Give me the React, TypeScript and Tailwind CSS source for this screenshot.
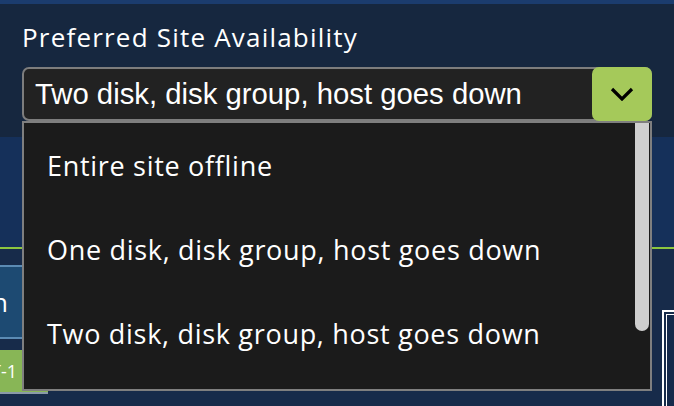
const options = [
  "Entire site offline",
  "One disk, disk group, host goes down",
  "Two disk, disk group, host goes down",
];

const App = () => {
  return (
    <div className="relative w-[674px] h-[406px] overflow-hidden bg-[#15305a] font-['Open_Sans',sans-serif] text-white">
      <div className="h-[4px] bg-[#1b3c6e]" />

      {/* Header with the select */}
      <div className="h-[133px] bg-[#16273f] px-[22px] pt-[20px]">
        <label className="block text-[26px] leading-none tracking-[1.2px]">Preferred Site Availability</label>
        <div className="relative mt-[17px] z-10">
          <div className="flex h-[54px] items-stretch rounded-[7px] border-2 border-[#7d7d7d] bg-[#222222]">
            <span className="flex-1 flex items-center pl-[11px] font-['Liberation_Sans',Arial,sans-serif] text-[29.3px] leading-none">
              {options[2]}
            </span>
            <div className="-my-[2px] -mr-[2px] w-[60px] flex items-center justify-center rounded-[7px] bg-[#a5c95a]">
              <svg width="24" height="14" viewBox="0 0 24 14" fill="none" stroke="black" strokeWidth="3.2">
                <polyline points="2,2 12,12 22,2" />
              </svg>
            </div>
          </div>

          {/* Open list */}
          <div className="absolute left-0 top-full w-[630px] h-[270px] border-2 border-[#7f7f7f] bg-[#1b1b1b] flex">
            <ul className="flex-1">
              {options.map((opt) => (
                <li key={opt} className="h-[84px] flex items-center pl-[23px] text-[27px] leading-none tracking-[0.7px]">
                  {opt}
                </li>
              ))}
            </ul>
            <div className="w-[14px] mr-px h-[208px] rounded-b-full rounded-t-[6px] bg-[#cfcfcf]" />
          </div>
        </div>
      </div>

      <div className="h-[110px]" />
      <div className="h-[2px] bg-[#8cc63f]" />

      {/* Page content behind the list */}
      <div className="flex h-[157px] bg-[#172b4a]">
        <div className="w-[48px] pt-[16px] flex flex-col">
          <div className="h-[74px] border-y-2 border-[#5b8bb4] bg-[#1d4a72] flex items-center">
            <div className="w-[8px] flex justify-end whitespace-nowrap text-[26px] leading-none">Location</div>
          </div>
          <div className="h-[11px]" />
          <div className="h-[42px] bg-[#88b656] flex items-center">
            <div className="w-[17px] flex justify-end whitespace-nowrap text-[18px] leading-none">HOST-1</div>
          </div>
          <div className="h-[2px] bg-[#8a9aa8]" />
        </div>
        <div className="flex-1" />
        <div className="w-[12px] mt-[61px] border-l-2 border-t-2 border-white pl-[2px] pt-[2px]">
          <div className="h-full border-l border-t border-white bg-[#15294a]" />
        </div>
      </div>
    </div>
  );
};

export default App;
